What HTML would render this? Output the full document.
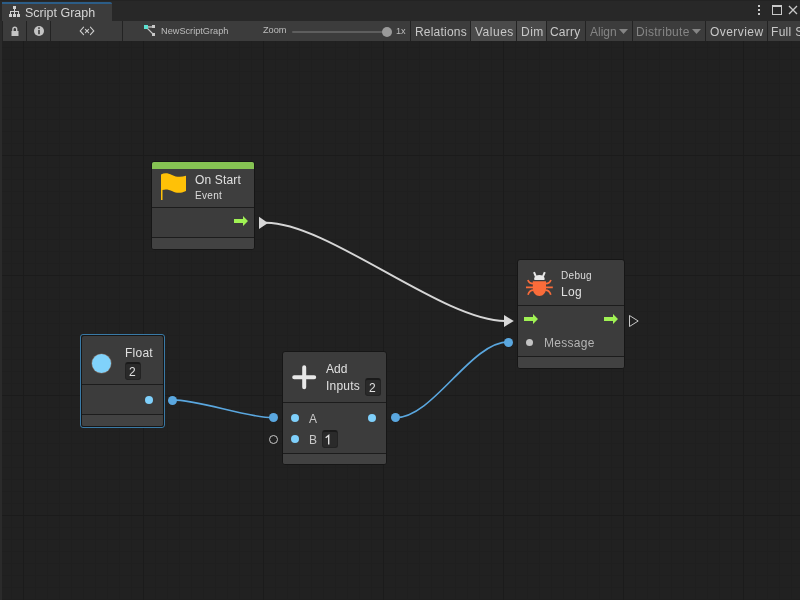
<!DOCTYPE html>
<html><head><meta charset="utf-8">
<style>
*{margin:0;padding:0;box-sizing:border-box}
html,body{width:800px;height:600px;overflow:hidden;background:#202020}
body{position:relative;font-family:"Liberation Sans",sans-serif;color:#d2d2d2;-webkit-font-smoothing:antialiased}
.t{will-change:transform}
.a{position:absolute}
.t{position:absolute;white-space:nowrap;line-height:1}
#graph{position:absolute;left:0;top:41px;width:800px;height:559px;background-color:#212121;
 background-image:
  linear-gradient(to right,#1b1b1b 0,#1b1b1b 1px,transparent 1px),
  linear-gradient(to bottom,#1b1b1b 0,#1b1b1b 1px,transparent 1px),
  linear-gradient(to right,#1f1f1f 0,#1f1f1f 1px,transparent 1px),
  linear-gradient(to bottom,#1f1f1f 0,#1f1f1f 1px,transparent 1px);
 background-size:120px 120px,120px 120px,12px 12px,12px 12px;
 background-position:23px -6px,23px -6px,11px 6px,11px 6px;
}
#topbar{position:absolute;left:0;top:0;width:800px;height:21px;background:#282828}
#tab{position:absolute;left:2px;top:2px;width:110px;height:19px;background:#3c3c3c;border-top:2px solid #2c5d87;border-top-right-radius:2px}
#toolbar{position:absolute;left:2px;top:21px;width:798px;height:20px;background:#3c3c3c}
.sep{position:absolute;top:21px;width:1px;height:20px;background:#232323}
.btn{position:absolute;top:21px;height:20px}
.node{position:absolute;background:#3c3c3c;border:1px solid #161616;border-radius:3px;overflow:hidden}
.hsep{position:absolute;left:0;right:0;height:1px;background:#1c1c1c}
.foot{position:absolute;left:0;right:0;background:#424242}
.vbox{position:absolute;background:#2a2a2a;border-radius:3px;border:1px solid #232323;border-top:2px solid #1a1a1a}
</style></head><body>
<div id="graph"></div>
<div class="a" style="left:0;top:0;width:2px;height:600px;background:#2b2b2b"></div>
<div id="topbar"></div>
<div class="a" style="left:0;top:0;width:800px;height:1px;background:#232323"></div>
<div id="tab"></div>
<div id="toolbar"></div>

<!-- tab content -->
<svg class="a" style="left:9px;top:6px" width="11" height="11" viewBox="0 0 11 11" shape-rendering="crispEdges">
 <rect x="4" y="0" width="3" height="3" fill="#d0d0d0"/>
 <rect x="5" y="3" width="1" height="3" fill="#d0d0d0"/>
 <rect x="1" y="5" width="9" height="1" fill="#d0d0d0"/>
 <rect x="1" y="6" width="1" height="2" fill="#d0d0d0"/>
 <rect x="5" y="6" width="1" height="2" fill="#d0d0d0"/>
 <rect x="9" y="6" width="1" height="2" fill="#d0d0d0"/>
 <rect x="0" y="8" width="3" height="3" fill="#d0d0d0"/>
 <rect x="4" y="8" width="3" height="3" fill="#d0d0d0"/>
 <rect x="8" y="8" width="3" height="3" fill="#d0d0d0"/>
</svg>
<div class="t" style="left:24.5px;top:6.6px;font-size:12.5px;color:#d4d4d4">Script Graph</div>

<!-- window controls -->
<div class="a" style="left:758px;top:5px;width:2px;height:2px;background:#c8c8c8"></div>
<div class="a" style="left:758px;top:9px;width:2px;height:2px;background:#c8c8c8"></div>
<div class="a" style="left:758px;top:13px;width:2px;height:2px;background:#c8c8c8"></div>
<div class="a" style="left:772px;top:5px;width:10px;height:10px;border:1px solid #c8c8c8;border-top-width:2px"></div>
<svg class="a" style="left:788px;top:5px" width="10" height="10" viewBox="0 0 10 10"><path d="M1 1L9 9M9 1L1 9" stroke="#c8c8c8" stroke-width="1.3"/></svg>

<!-- toolbar separators -->
<div class="sep" style="left:2px"></div>
<div class="sep" style="left:26px"></div>
<div class="sep" style="left:50px"></div>
<div class="sep" style="left:122px"></div>
<div class="sep" style="left:410px"></div>
<div class="sep" style="left:470px"></div>
<div class="sep" style="left:516px"></div>
<div class="sep" style="left:546px"></div>
<div class="sep" style="left:585px"></div>
<div class="sep" style="left:632px"></div>
<div class="sep" style="left:705px"></div>
<div class="sep" style="left:767px"></div>
<div class="btn" style="left:471px;width:45px;background:#4a4a4a"></div>
<div class="btn" style="left:517px;width:29px;background:#4a4a4a"></div>

<!-- lock -->
<svg class="a" style="left:10.5px;top:26px" width="8" height="11" viewBox="0 0 8 11">
 <path d="M1.9 5.2V3.2A1.9 1.9 0 0 1 5.7 3.2V5.2" fill="none" stroke="#c4c4c4" stroke-width="1.4"/>
 <rect x="0.5" y="5" width="7" height="5" fill="#c4c4c4"/>
</svg>
<!-- info -->
<svg class="a" style="left:34px;top:26px" width="10" height="10" viewBox="0 0 10 10">
 <circle cx="5" cy="5" r="5" fill="#c4c4c4"/>
 <rect x="4.2" y="3.9" width="1.6" height="4.3" fill="#3c3c3c"/>
 <rect x="4.2" y="1.3" width="1.6" height="1.6" fill="#3c3c3c"/>
</svg>
<!-- <x> -->
<svg class="a" style="left:79px;top:26px" width="16" height="10" viewBox="0 0 16 10">
 <path d="M4.6 1.2L1.2 4.9L4.6 8.7M11.4 1.2L14.8 4.9L11.4 8.7M6.4 3.3L9.6 6.6M9.6 3.3L6.4 6.6" fill="none" stroke="#cccccc" stroke-width="1.1" stroke-linecap="round"/>
</svg>
<!-- graph icon -->
<svg class="a" style="left:144px;top:25px" width="12" height="12" viewBox="0 0 12 12">
 <rect x="3" y="1.3" width="6" height="1.3" fill="#c8c8c8"/><path d="M3 3L9.5 9.5" stroke="#c8c8c8" stroke-width="1.1"/>
 <rect x="0" y="0" width="4" height="4" fill="#5ce0d0"/>
 <rect x="8" y="0" width="3" height="3" fill="#c8c8c8"/>
 <rect x="8" y="8" width="3" height="3" fill="#c8c8c8"/>
</svg>
<div class="t" style="left:160.5px;top:26.6px;font-size:9.2px;color:#bdbdbd">NewScriptGraph</div>
<div class="t" style="left:263px;top:26.2px;font-size:9.2px;color:#bdbdbd">Zoom</div>
<div class="a" style="left:292px;top:31px;width:94px;height:2px;background:#5e5e5e;border-radius:1px"></div>
<div class="a" style="left:382px;top:27px;width:10px;height:10px;background:#9a9a9a;border-radius:50%"></div>
<div class="t" style="left:395.5px;top:26.8px;font-size:9.2px;color:#bdbdbd">1x</div>

<div class="t" style="left:415px;top:25.8px;font-size:12px;color:#c8c8c8;letter-spacing:0.2px">Relations</div>
<div class="t" style="left:475px;top:25.8px;font-size:12px;color:#c8c8c8;letter-spacing:0.5px">Values</div>
<div class="t" style="left:521px;top:25.8px;font-size:12px;color:#c8c8c8;letter-spacing:0.5px">Dim</div>
<div class="t" style="left:550px;top:25.8px;font-size:12px;color:#c8c8c8;letter-spacing:0.2px">Carry</div>
<div class="t" style="left:590px;top:25.8px;font-size:12px;color:#858585">Align</div>
<svg class="a" style="left:619px;top:29px" width="9" height="5"><path d="M0 0H9L4.5 5Z" fill="#858585"/></svg>
<div class="t" style="left:636px;top:25.8px;font-size:12px;color:#858585;letter-spacing:0.3px">Distribute</div>
<svg class="a" style="left:692px;top:29px" width="9" height="5"><path d="M0 0H9L4.5 5Z" fill="#858585"/></svg>
<div class="t" style="left:710px;top:25.8px;font-size:12px;color:#c8c8c8;letter-spacing:0.45px">Overview</div>
<div class="t" style="left:771px;top:25.8px;font-size:12px;color:#c8c8c8;letter-spacing:0.3px">Full Screen</div>

<!-- edges -->
<svg class="a" style="left:0;top:0" width="800" height="600">
 <path d="M266 222.8C328 222.8 443 321 505 321" fill="none" stroke="#d6d6d6" stroke-width="1.9"/>
 <path d="M172.4 399.9C199.4 399.9 246.3 417.7 273.3 417.7" fill="none" stroke="#5aa7df" stroke-width="1.6"/>
 <path d="M395.5 417.7C433.5 417.7 470.5 341.9 508.5 341.9" fill="none" stroke="#5aa7df" stroke-width="1.6"/>
</svg>

<!-- On Start node -->
<div class="node" style="left:151px;top:161px;width:104px;height:89px">
 <div class="a" style="left:0;top:0;width:102px;height:7px;background:#86c353"></div>
 <div class="a" style="left:0;top:7px;width:102px;height:38px;background:#3e3e3e"></div>
 <div class="hsep" style="top:45px"></div>
 <div class="hsep" style="top:75px"></div>
 <div class="foot" style="top:76px;height:11px"></div>
</div>
<svg class="a" style="left:160px;top:172px" width="28" height="30" viewBox="160 172 28 30">
 <path d="M161 174.4C164.5 172.8 168 173 172 175C176 177 180.5 177.6 186 175.8V191C180.5 193.5 176.5 193.3 172.5 191.2C168.5 189.2 165 189 162.5 190V200H161Z" fill="#ffc107"/>
</svg>
<div class="t" style="left:195px;top:174px;font-size:12px;color:#e0e0e0;letter-spacing:0.15px">On Start</div>
<div class="t" style="left:195px;top:190.5px;font-size:10px;color:#dcdcdc;letter-spacing:0.3px">Event</div>
<svg class="a" style="left:233px;top:215px" width="16" height="12" viewBox="0 0 16 12"><path d="M1 4H10V1L15 6L10 11V8H1Z" fill="#a0f254"/></svg>
<svg class="a" style="left:258px;top:216px" width="12" height="14" viewBox="0 0 12 14"><path d="M1 0.8L10 6.9L1 13.1Z" fill="#d8d8d8"/></svg>

<!-- Debug Log node -->
<div class="node" style="left:517px;top:259px;width:108px;height:110px">
 <div class="hsep" style="top:45px"></div>
 <div class="hsep" style="top:96px"></div>
 <div class="foot" style="top:97px;height:11px"></div>
</div>
<svg class="a" style="left:524px;top:270px" width="30" height="28" viewBox="524 270 30 28">
 <path d="M534 272.2L535.9 276.6M544.8 272.2L542.9 276.6" fill="none" stroke="#e8e8e8" stroke-width="2"/>
 <path d="M534.3 279.9V278.3C534.3 276.3 536.6 274.9 539.4 274.9C542.2 274.9 544.5 276.3 544.5 278.3V279.9Z" fill="#e8e8e8"/>
 <path d="M532.8 281.2H546V288.5C546 292.8 543.1 296 539.4 296C535.7 296 532.8 292.8 532.8 288.5Z" fill="#fa6c3a"/>
 <path d="M527.9 280C528.6 282.4 530 283.6 533.5 283.6M550.9 280C550.2 282.4 548.8 283.6 545.3 283.6M526 287.3H552.8M528 294.7C528.9 291.7 530.4 290.1 533.5 290.1M550.8 294.7C549.9 291.7 548.4 290.1 545.3 290.1" fill="none" stroke="#fa6c3a" stroke-width="1.7"/>
</svg>
<div class="t" style="left:561px;top:270.5px;font-size:10px;color:#dcdcdc;letter-spacing:0.3px">Debug</div>
<div class="t" style="left:561px;top:285.5px;font-size:12px;color:#e0e0e0;letter-spacing:0.3px">Log</div>
<svg class="a" style="left:523px;top:313px" width="16" height="12" viewBox="0 0 16 12"><path d="M1 4H10V1L15 6L10 11V8H1Z" fill="#a0f254"/></svg>
<svg class="a" style="left:603px;top:313px" width="16" height="12" viewBox="0 0 16 12"><path d="M1 4H10V1L15 6L10 11V8H1Z" fill="#a0f254"/></svg>
<svg class="a" style="left:503px;top:314px" width="11" height="14" viewBox="0 0 11 14"><path d="M1 0.9L10.8 7L1 13.1Z" fill="#d8d8d8"/></svg>
<svg class="a" style="left:628px;top:314px" width="11" height="14" viewBox="0 0 11 14"><path d="M1.5 1.5L10.2 7L1.5 12.5Z" fill="none" stroke="#c8c8c8" stroke-width="1"/></svg>
<div class="a" style="left:508.5px;top:337.5px;width:9px;height:9px;margin-left:-4.5px;background:#5aa7df;border-radius:50%"></div>
<div class="a" style="left:526px;top:338.5px;width:7px;height:7px;background:#c4c4c4;border-radius:50%"></div>
<div class="t" style="left:544px;top:336.8px;font-size:12px;color:#b4b4b4;letter-spacing:0.3px">Message</div>

<!-- Float node -->
<div class="a" style="left:80px;top:334px;width:85px;height:94px;border:1px solid #3a7aa6;border-radius:3px"></div>
<div class="node" style="left:81px;top:335px;width:83px;height:92px">
 <div class="hsep" style="top:48px"></div>
 <div class="hsep" style="top:78px"></div>
 <div class="foot" style="top:79px;height:11px"></div>
</div>
<div class="a" style="left:91.5px;top:354px;width:19px;height:19px;background:#80d2fb;border-radius:50%;box-shadow:0 0 0 0.6px #7a6a60"></div>
<div class="t" style="left:125px;top:346.8px;font-size:12px;color:#e0e0e0;letter-spacing:0.25px">Float</div>
<div class="vbox" style="left:125px;top:362px;width:16px;height:17.5px"></div>
<div class="t" style="left:129px;top:365.6px;font-size:12px;color:#e0e0e0">2</div>
<div class="a" style="left:144.8px;top:395.7px;width:8px;height:8px;background:#7fd0fb;border-radius:50%"></div>
<div class="a" style="left:167.9px;top:395.5px;width:9px;height:9px;background:#5aa7df;border-radius:50%"></div>

<!-- Add node -->
<div class="node" style="left:282px;top:351px;width:105px;height:114px">
 <div class="hsep" style="top:50px"></div>
 <div class="hsep" style="top:101px"></div>
 <div class="foot" style="top:102px;height:10px"></div>
</div>
<svg class="a" style="left:290px;top:363px" width="28" height="28" viewBox="290 363 28 28"><path d="M294.2 377.2H314.2M304.2 367.2V387.2" stroke="#e8e8e8" stroke-width="4" stroke-linecap="round"/></svg>
<div class="t" style="left:326px;top:362.6px;font-size:12px;color:#e0e0e0">Add</div>
<div class="t" style="left:326px;top:379.6px;font-size:12px;color:#e0e0e0;letter-spacing:0.2px">Inputs</div>
<div class="vbox" style="left:365px;top:378px;width:16px;height:17.5px"></div>
<div class="t" style="left:368.6px;top:382px;font-size:12px;color:#e0e0e0">2</div>
<div class="a" style="left:268.9px;top:413.2px;width:9px;height:9px;background:#5aa7df;border-radius:50%"></div>
<div class="a" style="left:268.9px;top:434.5px;width:9px;height:9px;border:1px solid #c8c8c8;border-radius:50%"></div>
<div class="a" style="left:290.7px;top:413.7px;width:8px;height:8px;background:#7fd0fb;border-radius:50%"></div>
<div class="a" style="left:290.7px;top:435px;width:8px;height:8px;background:#7fd0fb;border-radius:50%"></div>
<div class="t" style="left:309px;top:412.5px;font-size:12px;color:#c8c8c8">A</div>
<div class="t" style="left:309px;top:434.1px;font-size:12px;color:#c8c8c8">B</div>
<div class="vbox" style="left:322px;top:430px;width:16px;height:17.5px"></div>
<svg class="a" style="left:0;top:0" width="800" height="600"><path d="M328.7 444.5V435.4L325.7 437.7" stroke="#e0e0e0" stroke-width="1.4" fill="none"/></svg>
<div class="a" style="left:367.7px;top:413.7px;width:8px;height:8px;background:#7fd0fb;border-radius:50%"></div>
<div class="a" style="left:391px;top:413.2px;width:9px;height:9px;background:#5aa7df;border-radius:50%"></div>
</body></html>
